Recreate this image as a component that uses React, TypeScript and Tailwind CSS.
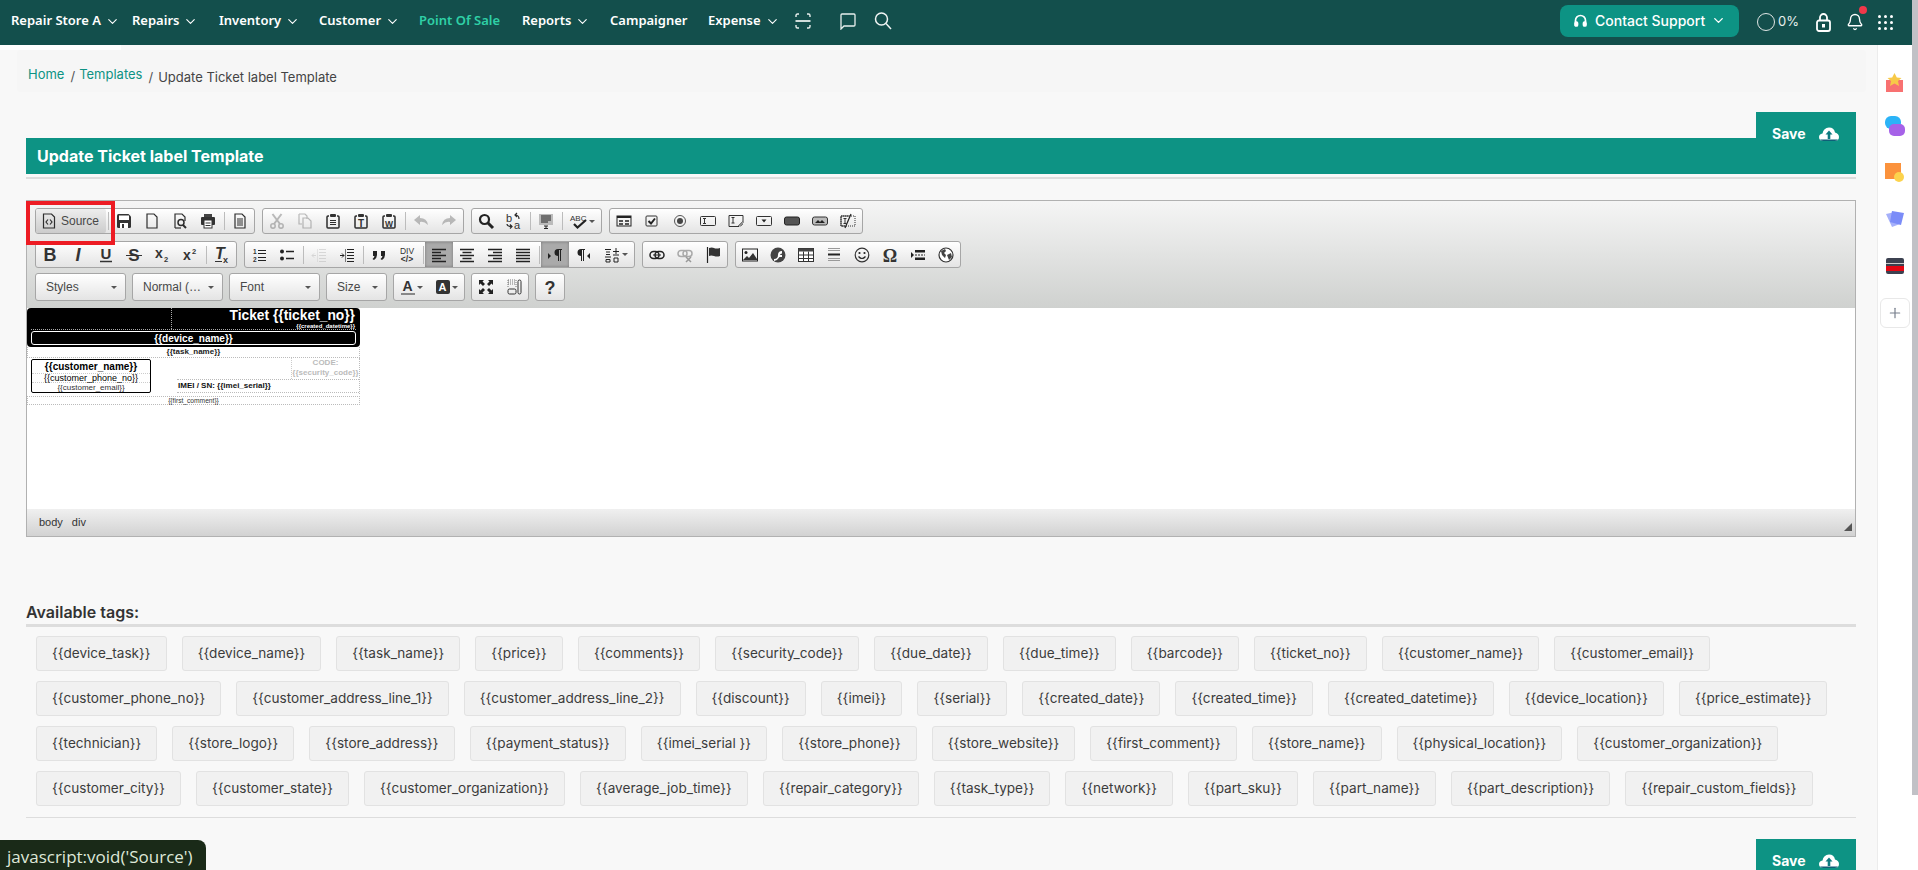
import { ChevronDown, Bell, Plus } from "lucide-react";
import type { ReactNode } from "react";

const tagRows = [
  ["{{device_task}}", "{{device_name}}", "{{task_name}}", "{{price}}", "{{comments}}", "{{security_code}}", "{{due_date}}", "{{due_time}}", "{{barcode}}", "{{ticket_no}}", "{{customer_name}}", "{{customer_email}}"],
  ["{{customer_phone_no}}", "{{customer_address_line_1}}", "{{customer_address_line_2}}", "{{discount}}", "{{imei}}", "{{serial}}", "{{created_date}}", "{{created_time}}", "{{created_datetime}}", "{{device_location}}", "{{price_estimate}}"],
  ["{{technician}}", "{{store_logo}}", "{{store_address}}", "{{payment_status}}", "{{imei_serial }}", "{{store_phone}}", "{{store_website}}", "{{first_comment}}", "{{store_name}}", "{{physical_location}}", "{{customer_organization}}"],
  ["{{customer_city}}", "{{customer_state}}", "{{customer_organization}}", "{{average_job_time}}", "{{repair_category}}", "{{task_type}}", "{{network}}", "{{part_sku}}", "{{part_name}}", "{{part_description}}", "{{repair_custom_fields}}"],
];

const nav = [
  { label: "Repair Store A", chev: true, w: "w-[120px]", pl: "pl-[11px]" },
  { label: "Repairs", chev: true, w: "w-[99px]", pl: "pl-[12px]" },
  { label: "Inventory", chev: true, w: "w-[100px]", pl: "" },
  { label: "Customer", chev: true, w: "w-[100px]", pl: "" },
  { label: "Point Of Sale", active: true, w: "w-[103px]", pl: "" },
  { label: "Reports", chev: true, w: "w-[88px]", pl: "" },
  { label: "Campaigner", w: "w-[98px]", pl: "" },
  { label: "Expense", chev: true, w: "w-[88px]", pl: "" },
];

const ln = { fill: "none", stroke: "#2d2d2d", strokeWidth: 1.2 };
const tx = { fontFamily: "Liberation Sans, sans-serif", fontWeight: 700, fill: "#333" };

const icons: Record<string, ReactNode> = {
  source: (<><path d="M2.500 1h8l3 3v11h-11z" {...ln} /><path d="M7 6.500L5 9l2 2.500M9 6.500l2 2.500-2 2.500" {...ln} /></>),
  save: (<><path d="M1 2.500Q1 1 2.500 1h10L15 3.500v10q0 1.500-1.500 1.500h-11Q1 15 1 13.500z" fill="#333" /><rect x="3" y="2.500" width="10" height="4.500" fill="#fff" /><rect x="4" y="10" width="8" height="5" fill="#fff" /><rect x="6" y="11" width="2" height="4" fill="#333" /></>),
  newpage: <path d="M3 1h7l3 3v11H3z" {...ln} />,
  preview: (<><path d="M3 15V1h7l3 3v4" {...ln} /><path d="M3 15h6" {...ln} /><circle cx="9" cy="9.500" r="3" {...ln} strokeWidth={1.500} /><path d="M11 12l3 3" {...ln} strokeWidth={2} /></>),
  print: (<><rect x="4" y="1" width="8" height="3" fill="#444" /><rect x="1" y="4" width="14" height="8" rx="1" fill="#333" /><rect x="4" y="7" width="8" height="8" fill="#fff" stroke="#333" /><path d="M5.500 10h5M5.500 12.500h5" stroke="#333" /></>),
  templates: (<><path d="M3 1h7l3 3v11H3z" {...ln} /><path d="M5 6h6M5 8h6M5 10h6M5 12h6" {...ln} /></>),
  cut: (<><circle cx="4" cy="13" r="2.200" {...ln} strokeWidth={1.500} /><circle cx="12" cy="13" r="2.200" {...ln} strokeWidth={1.500} /><path d="M3.500 1L11 11M12.500 1L5 11" stroke="#2d2d2d" strokeWidth={2} /></>),
  copy: (<><path d="M2 1h6l2 2v3M2 1v10h3" {...ln} /><path d="M6 5h5l3 3v7H6z" {...ln} /></>),
  paste: (<><path d="M4 3H3Q2 3 2 4v10q0 1 1 1h10q1 0 1-1V4q0-1-1-1h-1" {...ln} strokeWidth={1.500} /><rect x="5" y="1" width="6" height="3" rx="1" fill="#333" /><path d="M5 7.500h6M5 9.500h6M5 11.500h6" {...ln} /></>),
  pastetext: (<><path d="M4 3H3Q2 3 2 4v10q0 1 1 1h10q1 0 1-1V4q0-1-1-1h-1" {...ln} strokeWidth={1.500} /><rect x="5" y="1" width="6" height="3" rx="1" fill="#333" /><text x="8" y="13.500" fontSize="10" textAnchor="middle" {...tx}>T</text></>),
  pasteword: (<><path d="M4 3H3Q2 3 2 4v10q0 1 1 1h10q1 0 1-1V4q0-1-1-1h-1" {...ln} strokeWidth={1.500} /><rect x="5" y="1" width="6" height="3" rx="1" fill="#333" /><text x="8" y="13.500" fontSize="8.500" textAnchor="middle" {...tx}>W</text></>),
  undo: <path d="M7 2L1 7l6 5V9q4-1 8 3-1-7-8-7z" fill="#333" />,
  redo: <path d="M9 2l6 5-6 5V9q-4-1-8 3 1-7 8-7z" fill="#333" />,
  find: (<><circle cx="6.500" cy="6.500" r="4.500" fill="none" stroke="#222" strokeWidth={2.200} /><path d="M10 10l5 5" stroke="#222" strokeWidth={3} /></>),
  replace: (<><text x="0" y="9" fontSize="11" {...tx} fontWeight={400}>b</text><text x="8" y="16" fontSize="11" {...tx} fontWeight={400}>a</text><path d="M9 2q4 0 4 4M11 4L9 2l2-2M1 11q0 2.500 5 2.500M4 11.500l2 2-2 2" {...ln} /></>),
  selectall: (<><rect x="1" y="1" width="14" height="11" fill="#bbb" /><path d="M3 3h10M3 5h10M3 7h10M3 9h7" stroke="#222" /><path d="M6 13h4M8 13v3M6 15.500h4" stroke="#222" /></>),
  spell: (<><text x="-1" y="7.500" fontSize="8" {...tx} fontWeight={400}>ABC</text><path d="M3 11l3.500 3.500L15 7" fill="none" stroke="#222" strokeWidth={2.200} /></>),
  form: (<><rect x="1" y="3" width="14" height="10" fill="none" stroke="#222" /><rect x="1" y="3" width="14" height="2" fill="#222" /><path d="M3 8h4M9 8h4M3 11h4M9 11h4" stroke="#222" strokeWidth={1.500} /></>),
  checkbox: (<><rect x="2" y="3" width="11" height="10" rx="1" fill="none" stroke="#333" /><path d="M4.500 8l2.500 2.500L11 5.500" fill="none" stroke="#222" strokeWidth={2} /></>),
  radio: (<><circle cx="8" cy="8" r="5.500" fill="none" stroke="#555" /><circle cx="8" cy="8" r="3" fill="#444" /></>),
  textfield: (<><rect x="0.500" y="3.500" width="15" height="9" rx="1" fill="none" stroke="#333" /><path d="M3 5.500h3M3 10.500h3M4.500 5.500v5" stroke="#333" /></>),
  textarea: (<><path d="M1 2.500h14v7l-4 4H1z" fill="none" stroke="#333" /><path d="M3.500 4.500h3M3.500 10h3M5 4.500V10" stroke="#333" /><path d="M10 13l5-5M12.500 13.500l2.500-2.500" stroke="#777" /></>),
  select: (<><rect x="0.500" y="3.500" width="15" height="9" rx="1" fill="none" stroke="#333" /><path d="M5.500 6.500h5L8 9.500z" fill="#222" /></>),
  button: <rect x="0.500" y="4" width="15" height="8" rx="2" fill="#555" stroke="#222" />,
  imagebutton: (<><rect x="0.500" y="4" width="15" height="8" rx="2" fill="#bbb" stroke="#333" /><path d="M3 10l3-3 2 2 2-2 3 3z" fill="#222" /></>),
  hidden: (<><path d="M1 3h14v10H1z" fill="none" stroke="#333" strokeDasharray="1 1" /><path d="M1 3h8M1 3v10h4" stroke="#333" fill="none" /><path d="M3.500 5.500h3M3.500 10.500h3M5 5.500v5" stroke="#333" /><path d="M5 15L11 1" stroke="#222" strokeWidth={1.200} /></>),
  bold: <text x="8" y="14" fontSize="18" textAnchor="middle" {...tx}>B</text>,
  italic: <text x="8" y="14" fontSize="18" textAnchor="middle" {...tx} fontStyle="italic">I</text>,
  underline: (<><text x="8" y="12" fontSize="15" textAnchor="middle" {...tx}>U</text><path d="M2 14.500h12" stroke="#333" strokeWidth={1.500} /></>),
  strike: (<><text x="8" y="14" fontSize="17" textAnchor="middle" {...tx}>S</text><path d="M0 8.500h16" stroke="#333" /></>),
  sub: (<><text x="1" y="11" fontSize="14" {...tx}>x</text><text x="10" y="15" fontSize="7.500" {...tx}>2</text></>),
  sup: (<><text x="1" y="13" fontSize="14" {...tx}>x</text><text x="10" y="7" fontSize="7.500" {...tx}>2</text></>),
  removeformat: (<><text x="1" y="12" fontSize="16" {...tx} fontStyle="italic">T</text><text x="9" y="15.500" fontSize="9" {...tx}>x</text><path d="M1 14.500h7" stroke="#333" /></>),
  numbered: (<><text x="2" y="7" fontSize="6.500" {...tx}>1</text><text x="2" y="14.500" fontSize="6.500" {...tx}>2</text><path d="M7 3.500h8M7 6.500h8M7 10.500h8M7 13.500h8" stroke="#222" strokeWidth={1.200} /></>),
  bulleted: (<><circle cx="3" cy="4.500" r="2" fill="#222" /><circle cx="3" cy="11.500" r="2" fill="#222" /><path d="M7 4.500h8M7 11.500h8" stroke="#222" strokeWidth={1.600} /></>),
  outdent: (<><path d="M8 2.500h7M8 5.500h7M8 8.500h7M8 11.500h7M8 14.500h7" stroke="#999" /><path d="M6.500 2v13" stroke="#bbb" /><path d="M5 8.500H1M3 6.500L1 8.500l2 2" fill="none" stroke="#999" /></>),
  indent: (<><path d="M8 2.500h7M8 5.500h7M8 8.500h7M8 11.500h7M8 14.500h7" stroke="#222" /><path d="M6.500 2v13" stroke="#777" /><path d="M1 8.500h4M3 6.500l2 2-2 2" fill="none" stroke="#222" /></>),
  quote: (<><path d="M2 4h4v4q0 3-3 5l-1.500-1Q3 11 3.500 9H2z" fill="#222" /><path d="M10 4h4v4q0 3-3 5l-1.500-1q1.500-1 2-3H10z" fill="#222" /></>),
  div: (<><text x="8" y="7" fontSize="8.500" textAnchor="middle" {...tx} fontWeight={400}>DIV</text><text x="8" y="15" fontSize="8.500" textAnchor="middle" {...tx}>{"</>"}</text></>),
  left: <path d="M1 2.500h14M1 5.500h9M1 8.500h14M1 11.500h9M1 14.500h14" stroke="#222" strokeWidth={1.500} />,
  center: <path d="M1 2.500h14M3.500 5.500h9M1 8.500h14M3.500 11.500h9M1 14.500h14" stroke="#222" strokeWidth={1.500} />,
  right: <path d="M1 2.500h14M6 5.500h9M1 8.500h14M6 11.500h9M1 14.500h14" stroke="#222" strokeWidth={1.500} />,
  justify: <path d="M1 2.500h14M1 5.500h14M1 8.500h14M1 11.500h14M1 14.500h14" stroke="#222" strokeWidth={1.500} />,
  ltr: (<><path d="M1 6l3 3-3 3z" fill="#222" /><path d="M9 2h6v1h-1v11h-1V3h-1v11h-1V9a3.500 3.500 0 010-7z" fill="#222" /></>),
  rtl: (<><path d="M15 6l-3 3 3 3z" fill="#222" /><path d="M4 2h6v1H9v11H8V3H7v11H6V9a3.500 3.500 0 010-7z" fill="#222" /></>),
  language: (<><path d="M1 2.500h6M2 5h4M2 7.500h4M1 10h6M2 12.500h4v2.500H2zM9 4.500h6M12 1v6M9 8h6M10 11h4v4h-4z" fill="none" stroke="#222" /></>),
  link: (<><rect x="1" y="4.500" width="9" height="7" rx="3.500" fill="none" stroke="#222" strokeWidth={1.500} /><rect x="6" y="4.500" width="9" height="7" rx="3.500" fill="none" stroke="#222" strokeWidth={1.500} /><path d="M4 8h8" stroke="#222" /></>),
  unlink: (<><rect x="1" y="3.500" width="9" height="6" rx="3" fill="none" stroke="#aaa" strokeWidth={1.500} /><rect x="6" y="3.500" width="9" height="6" rx="3" fill="none" stroke="#aaa" strokeWidth={1.500} /><path d="M9 10l5 5M14 10l-5 5" stroke="#999" strokeWidth={1.500} /></>),
  anchor: (<><path d="M2.500 0v16" stroke="#222" strokeWidth={1.200} /><path d="M4 1q3-1 5 0t6 0v8q-3 1-6 0t-5 0z" fill="#333" /></>),
  image: (<><rect x="0.500" y="2" width="15" height="12" fill="none" stroke="#222" /><circle cx="4" cy="5.500" r="1.500" fill="#222" /><path d="M1 13l4-4 2 2 4-5 4 6v1H1z" fill="#333" /></>),
  flash: (<><circle cx="8" cy="8" r="7.500" fill="#444" /><path d="M4 12q4 0 4-4t4-4v2.500q-2 0-2 1.500h2v2h-2.500Q8 13 4 14z" fill="#fff" /></>),
  table: (<><rect x="0.500" y="1.500" width="15" height="13" fill="#fff" stroke="#333" /><rect x="0.500" y="1.500" width="15" height="3" fill="#444" /><path d="M5.500 4.500v10M10.500 4.500v10M.500 8h15M.500 11.500h15" stroke="#333" /></>),
  hr: (<><path d="M2 1.500h12M2 3.500h12M2 11.500h12M2 13.500h12" stroke="#999" /><path d="M2 7.500h12" stroke="#222" strokeWidth={2} /></>),
  smiley: (<><circle cx="8" cy="8" r="6.800" fill="none" stroke="#333" strokeWidth={1.200} /><circle cx="5.500" cy="6" r="1.100" fill="#222" /><circle cx="10.500" cy="6" r="1.100" fill="#222" /><path d="M4.500 9.500q3.500 4 7 0" fill="none" stroke="#222" strokeWidth={1.200} /></>),
  omega: <text x="8" y="14.500" fontSize="18" textAnchor="middle" fontFamily="Liberation Serif, serif" fontWeight={700} fill="#333">Ω</text>,
  pagebreak: (<><path d="M1 5l3 3-3 3z" fill="#222" /><path d="M5 3h10v2.500H5zM5 10.500h10V13H5z" fill="#222" /><path d="M5 8h10" stroke="#222" strokeDasharray="2 1" /></>),
  iframe: (<><circle cx="8" cy="8" r="7" fill="#fff" stroke="#333" strokeWidth={1.200} /><path d="M3 4l4-2 1 2-2 2 2 2-1 3-3-3zM9 8l4-2 1 4-3 3z" fill="#444" /></>),
  maximize: <path d="M1 1h5L4.500 2.500 7 5 5 7 2.500 4.500 1 6zM15 1v5l-1.500-1.500L11 7 9 5l2.500-2.500L10 1zM1 15v-5l1.500 1.500L5 9l2 2-2.500 2.500L6 15zM15 15h-5l1.500-1.500L9 11l2-2 2.500 2.500L15 10z" fill="#222" />,
  blocks: (<><path d="M2 1h8v7M2 1v7M2 3h8M2 5h8" stroke="#777" fill="none" strokeDasharray="1 1" /><rect x="2" y="10" width="8" height="5" rx="1.500" fill="none" stroke="#333" /><rect x="12" y="1" width="3" height="14" rx="1.500" fill="none" stroke="#333" /></>),
  help: <text x="8" y="15" fontSize="18" textAnchor="middle" {...tx}>?</text>,
};

const Icon = ({ name }: { name: string }) => (
  <svg width="16" height="16" viewBox="0 0 16 16" className="shrink-0 overflow-visible">
    {icons[name]}
  </svg>
);

const Btn = ({ name, off, on, menu }: { name: string; off?: boolean; on?: boolean; menu?: boolean }) => (
  <div
    className={`flex h-full items-center justify-center ${menu ? "w-[37px] gap-[2px]" : "w-[28px]"} ${on ? "bg-[#aaaaaa] shadow-[inset_0_0_3px_#777]" : ""}`}
  >
    <span className={off ? "opacity-30 flex" : "flex"}>
      <Icon name={name} />
    </span>
    {menu && <span className="border-x-[3px] border-t-[3px] border-x-transparent border-t-[#555]" />}
  </div>
);

const Sep = () => (
  <div className="flex h-full w-[4px] items-center justify-center">
    <div className="h-[18px] w-px bg-[#bcbcbc]" />
  </div>
);

const Group = ({ children }: { children: ReactNode }) => (
  <div className="flex h-full items-center rounded-[3px] border border-[#a6a6a6] bg-gradient-to-b from-white to-[#e4e4e4]">
    {children}
  </div>
);

const Combo = ({ label, w }: { label: string; w: string }) => (
  <div className={`${w} flex h-full items-center justify-between rounded-[3px] border border-[#a6a6a6] bg-gradient-to-b from-white to-[#e4e4e4] pl-[10px] pr-[8px] font-['Liberation_Sans',sans-serif] text-[12px] text-[#484848]`}>
    <span>{label}</span>
    <span className="border-x-[3px] border-t-[3px] border-x-transparent border-t-[#555]" />
  </div>
);

const SaveBtn = () => (
  <div className="flex h-[62px] w-[100px] shrink-0 items-start gap-[13px] bg-[#0d9384] pl-[16px] pt-[12px] font-['Inter',sans-serif] text-[14px] font-bold leading-[20px] text-white">
    <span>Save</span>
    <svg width="20" height="14" viewBox="0 0 20 14" className="mt-[3px]">
      <path d="M4.500 14Q0 14 0 10q0-3 3.500-3.500Q4.500 1 10 0.500q5 0 6 5 4 1 4 4.500 0 4-4.500 4z" fill="#fff" />
      <path d="M4.500 14h11q2.500 0 3.500-1.500H1Q2 14 4.500 14z" fill="#0f5f78" />
      <path d="M10 3.500l3.500 4H11.300V12H8.700V7.500H6.500z" fill="#0d7a80" />
    </svg>
  </div>
);

const Tag = ({ t }: { t: string }) => (
  <div className="flex h-[35px] items-center whitespace-pre rounded-[3px] border border-[#e2e2e2] bg-[#f1f1f1] px-[15px] font-['Inter',sans-serif] text-[13.600px] text-[#3c3c3c]">
    {t}
  </div>
);

export default function App() {
  return (
    <div className="relative flex h-[870px] w-[1918px] overflow-hidden bg-[#f8f8f8] font-['Inter',sans-serif]">
      <div className="flex min-w-0 flex-1 flex-col">
        {/* top nav */}
        <header className="flex h-[45px] shrink-0 items-center bg-[#134f4c] pb-[3px] font-['Noto_Sans',sans-serif] text-[13px] font-semibold text-white">
          {nav.map((n) => (
            <div key={n.label} className={`${n.w} ${n.pl} flex shrink-0 items-center gap-[4px] ${n.active ? "text-[#2fd0a6]" : ""}`}>
              <span className="whitespace-nowrap">{n.label}</span>
              {n.chev && <ChevronDown className="h-[15px] w-[15px]" strokeWidth={1.800} />}
            </div>
          ))}
          <svg width="16" height="16" viewBox="0 0 16 16" fill="none" stroke="#e8efed" strokeWidth="1.400" className="-ml-[1px]">
            <path d="M1 4V2.500Q1 1 2.500 1H4M12 1h1.500Q15 1 15 2.500V4M1 12v1.500Q1 15 2.500 15H4M12 15h1.500q1.500 0 1.500-1.500V12" />
            <path d="M0.500 8h15" strokeWidth="2" stroke="#d0dedb" />
          </svg>
          <svg width="18" height="18" viewBox="0 0 18 18" fill="none" stroke="#e8efed" strokeWidth="1.300" className="ml-[28px]">
            <path d="M2 3Q2 2 3 2h12q1 0 1 1v10q0 1-1 1H5l-3 3z" />
          </svg>
          <svg width="18" height="18" viewBox="0 0 18 18" fill="none" stroke="#f0f5f4" strokeWidth="1.500" className="ml-[17px]">
            <circle cx="7.500" cy="7" r="6" />
            <path d="M12 11.500L17 17" />
          </svg>
          <div className="ml-auto -mt-[1px] flex h-[32px] w-[179px] items-center rounded-[8px] bg-[#0d9384] pl-[14px] font-['Inter',sans-serif] text-[14px] font-medium">
            <svg width="13" height="14" viewBox="0 0 13 14" fill="none" stroke="#fff" strokeWidth="1.700">
              <path d="M1.500 8V6.500a5 5 0 0110 0V8" />
              <rect x="1" y="8" width="2.500" height="4" rx="1" fill="#fff" />
              <rect x="9.500" y="8" width="2.500" height="4" rx="1" fill="#fff" />
            </svg>
            <span className="ml-[8px] whitespace-nowrap">Contact Support</span>
            <ChevronDown className="ml-[6px] h-[15px] w-[15px]" strokeWidth={2.200} />
          </div>
          <div className="ml-[18px] mt-[1px] h-[18px] w-[18px] rounded-full border-[1.500px] border-[#e0e6e5]" />
          <span className="ml-[3px] mt-[1px] font-['Inter',sans-serif] text-[13px] font-normal text-[#e8efed]">0%</span>
          <svg width="15" height="19" viewBox="0 0 15 19" fill="none" stroke="#fff" strokeWidth="1.800" className="ml-[17px] mt-[2px]">
            <rect x="1" y="7.500" width="13" height="10.500" rx="2" />
            <path d="M4 7.500V4.500a3.500 3.500 0 017 0v3" />
            <rect x="6" y="11" width="3" height="3.500" fill="#fff" stroke="none" />
          </svg>
          <div className="relative ml-[15px] mt-[2px]">
            <Bell className="h-[18px] w-[18px]" strokeWidth={1.800} />
            <span className="absolute -right-[3px] -top-[7px] h-[8px] w-[8px] rounded-full bg-[#f0384a]" />
          </div>
          <div className="ml-[14px] mr-[19px] mt-[2px] grid w-[15px] grid-cols-3 gap-[3px]">
            {Array.from({ length: 9 }).map((_, i) => (
              <span key={i} className="h-[3px] w-[3px] rounded-full bg-white" />
            ))}
          </div>
        </header>

        <div className="flex min-h-0 flex-1">
          <main className="min-w-0 flex-1 pl-[17px] pr-[11px] pt-[5px]">
            {/* breadcrumb */}
            <div className="flex h-[42px] items-start rounded-[3px] bg-[#f6f6f6] pl-[11px] pt-[14px] font-['Inter',sans-serif] text-[13px] leading-[20px] text-[#0d9384]">
              <span>Home</span>
              <span className="ml-[6px] mt-[2px] text-[#555]">/</span>
              <span className="ml-[4px]">Templates</span>
              <span className="ml-[6px] mt-[3px] text-[#555]">/</span>
              <span className="ml-[5px] mt-[3px] text-[#444]">Update Ticket label Template</span>
            </div>

            <div className="ml-[9px] mr-[10px]">
              <div className="mt-[20px] flex justify-end">
                <SaveBtn />
              </div>
              <div className="-mt-[36px] flex h-[36px] items-center bg-[#0d9384] pl-[11px] text-[16px] font-bold text-white">
                Update Ticket label Template
              </div>
              <div className="mt-[3px] h-[2px] bg-[#dddddd]" />

              {/* editor */}
              <div className="mt-[21px] h-[337px] border border-[#b1b1b1]">
                <div className="flex h-[107px] flex-col bg-gradient-to-b from-[#f5f5f5] to-[#cfd1cf] px-[8px] pt-[7px]">
                  <div className="flex h-[26px] gap-[7px]">
                    <Group>
                      <div className="flex h-full w-[70px] items-center gap-[2px] rounded-[2px] bg-gradient-to-b from-[#eeeeee] to-[#cccccc] pl-[5px] font-['Liberation_Sans',sans-serif] text-[12px] text-[#484848]">
                        <Icon name="source" />
                        <span className="ml-[2px]">Source</span>
                      </div>
                      <Sep />
                      <Btn name="save" /><Btn name="newpage" /><Btn name="preview" /><Btn name="print" />
                      <Sep />
                      <Btn name="templates" />
                    </Group>
                    <Group>
                      <Btn name="cut" off /><Btn name="copy" off /><Btn name="paste" /><Btn name="pastetext" /><Btn name="pasteword" />
                      <Sep />
                      <Btn name="undo" off /><Btn name="redo" off />
                    </Group>
                    <Group>
                      <Btn name="find" /><Btn name="replace" />
                      <Sep />
                      <Btn name="selectall" />
                      <Sep />
                      <Btn name="spell" menu />
                    </Group>
                    <Group>
                      <Btn name="form" /><Btn name="checkbox" /><Btn name="radio" /><Btn name="textfield" /><Btn name="textarea" /><Btn name="select" /><Btn name="button" /><Btn name="imagebutton" /><Btn name="hidden" />
                    </Group>
                  </div>
                  <div className="mt-[7px] flex h-[27px] gap-[7px]">
                    <Group>
                      <Btn name="bold" /><Btn name="italic" /><Btn name="underline" /><Btn name="strike" /><Btn name="sub" /><Btn name="sup" />
                      <Sep />
                      <Btn name="removeformat" />
                    </Group>
                    <Group>
                      <Btn name="numbered" /><Btn name="bulleted" />
                      <Sep />
                      <Btn name="outdent" off /><Btn name="indent" />
                      <Sep />
                      <Btn name="quote" /><Btn name="div" />
                      <Sep />
                      <Btn name="left" on /><Btn name="center" /><Btn name="right" /><Btn name="justify" />
                      <Sep />
                      <Btn name="ltr" on /><Btn name="rtl" />
                      <Btn name="language" menu />
                    </Group>
                    <Group>
                      <Btn name="link" /><Btn name="unlink" /><Btn name="anchor" />
                    </Group>
                    <Group>
                      <Btn name="image" /><Btn name="flash" /><Btn name="table" /><Btn name="hr" /><Btn name="smiley" /><Btn name="omega" /><Btn name="pagebreak" /><Btn name="iframe" />
                    </Group>
                  </div>
                  <div className="mt-[5px] flex h-[28px] gap-[6px]">
                    <Combo label="Styles" w="w-[91px]" />
                    <Combo label="Normal (…" w="w-[91px]" />
                    <Combo label="Font" w="w-[91px]" />
                    <Combo label="Size" w="w-[61px]" />
                    <Group>
                      <div className="flex h-full w-[35px] items-center justify-center gap-[2px]">
                        <div className="flex flex-col items-center">
                          <span className="font-['Liberation_Sans',sans-serif] text-[14px] font-bold leading-[14px] text-[#333]">A</span>
                          <span className="h-[2px] w-[14px] bg-[#888]" />
                        </div>
                        <span className="border-x-[3px] border-t-[3px] border-x-transparent border-t-[#555]" />
                      </div>
                      <div className="flex h-full w-[35px] items-center justify-center gap-[2px]">
                        <span className="flex h-[14px] w-[14px] items-center justify-center rounded-[2px] bg-[#333] font-['Liberation_Sans',sans-serif] text-[11px] font-bold text-white">A</span>
                        <span className="border-x-[3px] border-t-[3px] border-x-transparent border-t-[#555]" />
                      </div>
                    </Group>
                    <Group>
                      <Btn name="maximize" /><Btn name="blocks" />
                    </Group>
                    <Group>
                      <Btn name="help" />
                    </Group>
                  </div>
                </div>

                {/* editor content */}
                <div className="h-[201px] bg-white font-['Liberation_Sans',sans-serif]">
                  <div className="w-[333px]">
                    <div className="h-[39px] rounded-[4px] bg-black px-[4px] text-white">
                      <div className="flex h-[22px] border-b border-dotted border-[#aaa]">
                        <div className="w-[141px] border-r border-dotted border-[#aaa]" />
                        <div className="flex flex-1 flex-col items-end pr-px">
                          <span className="whitespace-nowrap text-[13.800px] font-bold leading-[15px]">{"Ticket {{ticket_no}}"}</span>
                          <span className="whitespace-nowrap text-[6px] font-bold leading-[7px]">{"{{created_datetime}}"}</span>
                        </div>
                      </div>
                      <div className="mt-px flex h-[14px] items-center justify-center rounded-[3px] border border-white text-[10px] font-bold">
                        {"{{device_name}}"}
                      </div>
                    </div>
                    <div className="flex h-[11px] items-center justify-center border-x border-b border-dotted border-[#bbb] text-[8px] font-bold text-[#222]">
                      {"{{task_name}}"}
                    </div>
                    <div className="flex h-[36px]">
                      <div className="w-[150px] pl-[4px] pt-px">
                        <div className="flex h-[34px] w-[120px] flex-col items-center rounded-[2px] border border-black text-black">
                          <span className="h-[13px] text-[10px] font-bold leading-[13px]">{"{{customer_name}}"}</span>
                          <span className="h-[10px] w-full border-y border-dotted border-[#ccc] text-center text-[9px] leading-[9px]">{"{{customer_phone_no}}"}</span>
                          <span className="text-[8px] leading-[10px] text-[#333]">{"{{customer_email}}"}</span>
                        </div>
                      </div>
                      <div className="flex-1 border-r border-dotted border-[#bbb]">
                        <div className="flex h-[22px] border-b border-dotted border-[#bbb]">
                          <div className="flex-1" />
                          <div className="flex w-[68px] flex-col items-center border-l border-dotted border-[#ccc] text-[8px] font-bold leading-[10px] text-[#bbb]">
                            <span>CODE:</span>
                            <span className="whitespace-nowrap">{"{{security_code}}"}</span>
                          </div>
                        </div>
                        <div className="flex h-[13px] items-center border-b border-dotted border-[#bbb] pl-px text-[8px] font-bold text-[#111]">
                          {"IMEI / SN: {{imei_serial}}"}
                        </div>
                      </div>
                    </div>
                    <div className="mt-[2px] flex h-[9px] items-center justify-center border border-dotted border-[#bbb] text-[6.670px] text-[#333]">
                      {"{{first_comment}}"}
                    </div>
                  </div>
                </div>

                {/* editor path bar */}
                <div className="flex h-[27px] items-center justify-between bg-gradient-to-b from-[#f0f0f0] to-[#d2d2d2] pl-[12px] pr-[3px] font-['Liberation_Sans',sans-serif] text-[11px] text-[#333]">
                  <div className="flex gap-[9px]">
                    <span>body</span>
                    <span>div</span>
                  </div>
                  <span className="mt-[9px] h-0 w-0 border-b-[8px] border-l-[8px] border-b-[#555] border-l-transparent" />
                </div>
              </div>

              <div className="mt-[65px] text-[16px] font-semibold leading-[20px] text-[#333]">Available tags:</div>
              <div className="mt-[2px] h-[3px] bg-[#dddddd]" />
              <div className="flex flex-col gap-[10px] pl-[10px] pt-[9px]">
                {tagRows.map((row, i) => (
                  <div key={i} className="flex gap-[15px]">
                    {row.map((t) => (
                      <Tag key={t} t={t} />
                    ))}
                  </div>
                ))}
              </div>
              <div className="mt-[11px] h-px bg-[#dddddd]" />
              <div className="mt-[21px] flex justify-end">
                <SaveBtn />
              </div>
            </div>
          </main>

          {/* right rail */}
          <aside className="flex w-[35px] shrink-0 flex-col items-center border-l border-[#ececec] bg-white pt-[28px]">
            <svg width="20" height="20" viewBox="0 0 20 20">
              <rect x="1" y="7" width="17" height="12" fill="#f87171" />
              <path d="M9.500 0l2.300 4.500 4.700.5-3.500 3 1 5-4.500-2.500L5 13l1-5-3.500-3 4.700-.5z" fill="#f7c948" />
            </svg>
            <svg width="20" height="22" viewBox="0 0 20 22" className="mt-[23px]">
              <rect x="0" y="0" width="16" height="13" rx="6" fill="#2bb3f7" />
              <rect x="4" y="8" width="16" height="12" rx="5" fill="#a662e8" />
            </svg>
            <svg width="20" height="20" viewBox="0 0 20 20" className="mt-[25px]">
              <rect x="0" y="0" width="16" height="16" fill="#fb923c" />
              <circle cx="14" cy="14" r="5" fill="#fcd34d" />
            </svg>
            <svg width="20" height="20" viewBox="0 0 20 20" className="mt-[26px]">
              <path d="M1 5l9-2 5 12-8 3z" fill="#a5b0fa" />
              <path d="M7 2l12 2-3 12-11-3z" fill="#7b8cf8" />
            </svg>
            <svg width="18" height="16" viewBox="0 0 18 16" className="mt-[29px]">
              <rect x="0" y="0" width="18" height="16" rx="2" fill="#3c4150" />
              <rect x="0" y="5" width="18" height="1" fill="#ccc" />
              <rect x="0" y="8" width="18" height="5" fill="#e30613" />
            </svg>
            <div className="mt-[24px] flex h-[30px] w-[30px] items-center justify-center rounded-[6px] border border-[#e8e8e8]">
              <Plus className="h-[16px] w-[16px] text-[#777f8c]" strokeWidth={1.800} />
            </div>
          </aside>
        </div>
      </div>

      {/* scrollbar */}
      <div className="w-[6px] shrink-0 bg-white">
        <div className="h-[795px] bg-[#c1c1c6]" />
      </div>

      {/* dropdown sliver under the nav */}
      <div className="absolute left-0 top-[45px] h-[5px] w-[121px] bg-white" />

      {/* red annotation round the Source button */}
      <div className="absolute left-[26px] top-[201px] h-[44px] w-[89px] border-[4px] border-[#ed1c24]" />

      {/* link status tooltip */}
      <div className="absolute bottom-0 left-0 flex h-[30px] w-[206px] items-center rounded-tr-[8px] bg-[#1a2a18] pl-[7px] pt-[3px] font-['Open_Sans',sans-serif] text-[17px] text-[#dfe8d8]">
        javascript:void('Source')
      </div>
    </div>
  );
}
